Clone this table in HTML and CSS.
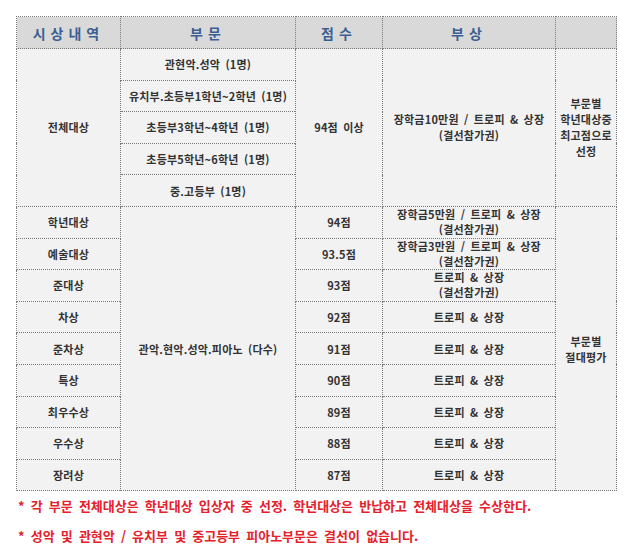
FILE: index.html
```html
<!DOCTYPE html>
<html lang="ko">
<head>
<meta charset="utf-8">
<link rel="stylesheet" href="styles.css">
</head>
<body>
<div class="page">
<table class="awards">
  <colgroup>
    <col class="c1"><col class="c2"><col class="c3"><col class="c4"><col class="c5">
  </colgroup>
  <thead>
    <tr><th>시상내역</th><th>부문</th><th>점수</th><th>부상</th><th></th></tr>
  </thead>
  <tbody>
    <tr><td rowspan="5">전체대상</td><td>관현악.성악 (1명)</td><td rowspan="5">94점 이상</td><td rowspan="5">장학금10만원 / 트로피 &amp; 상장<br>(결선참가권)</td><td rowspan="5">부문별<br>학년대상중<br>최고점으로<br>선정</td></tr>
    <tr><td>유치부.초등부1학년~2학년 (1명)</td></tr>
    <tr><td>초등부3학년~4학년 (1명)</td></tr>
    <tr><td>초등부5학년~6학년 (1명)</td></tr>
    <tr><td>중.고등부 (1명)</td></tr>
    <tr><td>학년대상</td><td rowspan="9">관악.현악.성악.피아노 (다수)</td><td>94점</td><td class="two">장학금5만원 / 트로피 &amp; 상장<br>(결선참가권)</td><td rowspan="9">부문별<br>절대평가</td></tr>
    <tr><td>예술대상</td><td>93.5점</td><td class="two">장학금3만원 / 트로피 &amp; 상장<br>(결선참가권)</td></tr>
    <tr><td>준대상</td><td>93점</td><td class="two">트로피 &amp; 상장<br>(결선참가권)</td></tr>
    <tr><td>차상</td><td>92점</td><td>트로피 &amp; 상장</td></tr>
    <tr><td>준차상</td><td>91점</td><td>트로피 &amp; 상장</td></tr>
    <tr><td>특상</td><td>90점</td><td>트로피 &amp; 상장</td></tr>
    <tr><td>최우수상</td><td>89점</td><td>트로피 &amp; 상장</td></tr>
    <tr><td>우수상</td><td>88점</td><td>트로피 &amp; 상장</td></tr>
    <tr><td>장려상</td><td>87점</td><td>트로피 &amp; 상장</td></tr>
  </tbody>
</table>
<p class="note">* 각 부문 전체대상은 학년대상 입상자 중 선정. 학년대상은 반납하고 전체대상을 수상한다.</p>
<p class="note">* 성악 및 관현악 / 유치부 및 중고등부 피아노부문은 결선이 없습니다.</p>
</div>
</body>
</html>
```
FILE: styles.css
```css
html, body {
  margin: 0;
  padding: 0;
  background: #ffffff;
}
.page {
  padding: 16px 0 0 16px;
  font-family: "Noto Sans CJK KR", "Noto Sans", sans-serif;
}
.awards {
  border-collapse: collapse;
  table-layout: fixed;
  width: 600px;
}
.c1 { width: 104px; }
.c2 { width: 175px; }
.c3 { width: 87px; }
.c4 { width: 173px; }
.c5 { width: 61px; }
.awards th, .awards td {
  border: 1px dotted #7a7a7a;
  text-align: center;
  vertical-align: middle;
  padding: 0;
}
.awards th {
  background: #d9d9d9;
  color: #3b5f92;
  font-size: 14px;
  font-weight: 700;
  letter-spacing: 5px;
  height: 31px;
}
.awards td {
  background: #f2f2f2;
  color: #333333;
  font-size: 11px;
  font-weight: 700;
  height: 30.6px;
  line-height: 16px;
  word-spacing: 2px;
  letter-spacing: 0.2px;
}
.awards td.two {
  line-height: 15px;
}
.note {
  margin: 0;
  padding-left: 2px;
  color: #e5212b;
  font-size: 13px;
  font-weight: 700;
  line-height: 30px;
  word-spacing: 2.5px;
}
```
